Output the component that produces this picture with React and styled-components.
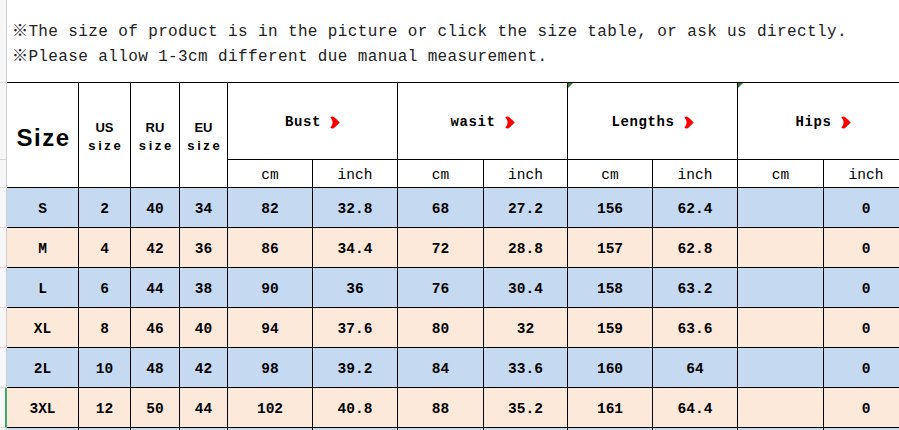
import styled, { createGlobalStyle } from "styled-components";

const GlobalStyle = createGlobalStyle`
  html, body {
    margin: 0;
    padding: 0;
    background: #ffffff;
    overflow: hidden;
  }
  body {
    width: 899px;
    height: 430px;
  }
`;

const MONO = `"Liberation Mono", "Noto Sans CJK SC", monospace`;
const SANS = `"Liberation Sans", Arial, sans-serif`;

const COLUMNS = [72, 52, 49, 48, 85, 85, 86, 84, 85, 85, 86, 85];

const MEASURES = [
  { label: "Bust", marked: false },
  { label: "wasit", marked: false },
  { label: "Lengths", marked: true },
  { label: "Hips", marked: true },
];

// the last row only shows its top edge in the picture, so it stays empty
const ROWS = [
  ["S", "2", "40", "34", "82", "32.8", "68", "27.2", "156", "62.4", "", "0"],
  ["M", "4", "42", "36", "86", "34.4", "72", "28.8", "157", "62.8", "", "0"],
  ["L", "6", "44", "38", "90", "36", "76", "30.4", "158", "63.2", "", "0"],
  ["XL", "8", "46", "40", "94", "37.6", "80", "32", "159", "63.6", "", "0"],
  ["2L", "10", "48", "42", "98", "39.2", "84", "33.6", "160", "64", "", "0"],
  ["3XL", "12", "50", "44", "102", "40.8", "88", "35.2", "161", "64.4", "", "0"],
  ["", "", "", "", "", "", "", "", "", "", "", ""],
];

const GUTTER = [83, 77, 28, 40, 40, 40, 40, 40, 40, 40];

export default function App() {
  return (
    <>
      <GlobalStyle />
      <Sheet>
        <Gutter>
          {GUTTER.map((h, i) => (
            <GutterCell key={i} $height={h} $active={i === 8} />
          ))}
        </Gutter>
        <Main>
          <Notes>
            <Note>※The size of product is in the picture or click the size table, or ask us directly.</Note>
            <Note>※Please allow 1-3cm different due manual measurement.</Note>
          </Notes>
          <Grid>
            <HeadCell $rows={2}>
              <SizeTitle>Size</SizeTitle>
            </HeadCell>
            {["US", "RU", "EU"].map((r) => (
              <HeadCell key={r} $rows={2}>
                <Region>
                  <span>{r}</span>
                  <span>size</span>
                </Region>
              </HeadCell>
            ))}
            {MEASURES.map((m) => (
              <HeadCell key={m.label} $cols={2}>
                {m.marked && <Marker />}
                <Measure>
                  {m.label}
                  <Arrow viewBox="0 0 10 13">
                    <path
                      d="M0.3 1.2 Q3 -0.6 5.2 2 L9.8 6.5 L5.2 11 Q3 13.6 0.3 11.8 Q2.6 9.2 2.6 6.5 Q2.6 3.8 0.3 1.2 Z"
                      fill="#ff0000"
                    />
                  </Arrow>
                </Measure>
              </HeadCell>
            ))}
            {MEASURES.map((m) => (
              <UnitPair key={m.label} />
            ))}
            {ROWS.map((row, i) =>
              row.map((value, j) => (
                <DataCell key={`${i}-${j}`} $tone={i % 2 === 0 ? "blue" : "peach"}>
                  {value}
                </DataCell>
              ))
            )}
          </Grid>
        </Main>
      </Sheet>
    </>
  );
}

function UnitPair() {
  return (
    <>
      <UnitCell>cm</UnitCell>
      <UnitCell>inch</UnitCell>
    </>
  );
}

const Sheet = styled.div`
  display: flex;
  align-items: flex-start;
  width: 899px;
  height: 430px;
  overflow: hidden;
`;

const Gutter = styled.div`
  display: flex;
  flex-direction: column;
  flex: 0 0 7px;
  width: 7px;
`;

const GutterCell = styled.div`
  box-sizing: border-box;
  height: ${(p) => p.$height}px;
  background: #f7f7f7;
  border-bottom: 1px solid #d6d6d6;
  border-right: ${(p) => (p.$active ? "2px solid #3fa86e" : "1px solid #cfcfcf")};
`;

const Main = styled.div`
  display: flex;
  flex-direction: column;
  flex: 0 0 auto;
`;

const Notes = styled.div`
  box-sizing: border-box;
  height: 82px;
  padding: 20px 0 0 5px;
`;

const Note = styled.p`
  margin: 0;
  font-family: ${MONO};
  font-size: 16px;
  line-height: 25px;
  letter-spacing: 0.38px;
  color: #222222;
  white-space: nowrap;
`;

const Grid = styled.div`
  display: grid;
  grid-template-columns: ${COLUMNS.map((c) => `${c}px`).join(" ")};
  grid-template-rows: 77px 28px repeat(7, 40px);
  border-top: 1px solid #000000;
`;

const Cell = styled.div`
  box-sizing: border-box;
  display: flex;
  align-items: center;
  justify-content: center;
  border-right: 1px solid #000000;
  border-bottom: 1px solid #000000;
  color: #000000;
`;

const HeadCell = styled(Cell)`
  position: relative;
  background: #ffffff;
  grid-row: span ${(p) => p.$rows || 1};
  grid-column: span ${(p) => p.$cols || 1};
`;

const SizeTitle = styled.span`
  font-family: ${SANS};
  font-weight: 700;
  font-size: 24px;
  letter-spacing: 1.5px;
  margin-left: 2px;
  margin-top: 6px;
`;

const Region = styled.div`
  display: flex;
  flex-direction: column;
  align-items: center;
  gap: 1px;
  margin-top: 2px;
  font-family: ${SANS};
  font-weight: 700;
  font-size: 13px;
  line-height: 17px;

  span:last-child {
    letter-spacing: 2.6px;
    margin-right: -2.6px;
  }
`;

const Measure = styled.div`
  display: flex;
  align-items: center;
  gap: 9px;
  margin-top: 2px;
  font-family: ${MONO};
  font-weight: 700;
  font-size: 14px;
  letter-spacing: 0.6px;
`;

const Arrow = styled.svg`
  width: 10px;
  height: 13px;
  flex: 0 0 auto;
`;

const Marker = styled.div`
  position: absolute;
  top: 0;
  left: 0;
  width: 0;
  height: 0;
  border-top: 5px solid #2e7d32;
  border-right: 5px solid transparent;
`;

const UnitCell = styled(Cell)`
  background: #ffffff;
  font-family: ${MONO};
  font-size: 14.5px;
  padding-top: 2px;
`;

const DataCell = styled(Cell)`
  background: ${(p) => (p.$tone === "blue" ? "#c5d9f1" : "#fde9d9")};
  font-family: ${MONO};
  font-weight: 700;
  font-size: 14.5px;
  padding-top: 2px;
`;
